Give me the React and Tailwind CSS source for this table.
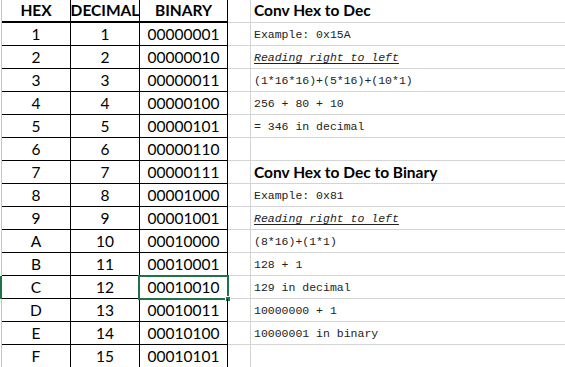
const rows = [
  ['1', '1', '00000001', 'Example: 0x15A', 'mono'],
  ['2', '2', '00000010', 'Reading right to left', 'italic'],
  ['3', '3', '00000011', '(1*16*16)+(5*16)+(10*1)', 'mono'],
  ['4', '4', '00000100', '256 + 80 + 10', 'mono'],
  ['5', '5', '00000101', '= 346 in decimal', 'mono'],
  ['6', '6', '00000110', '', 'mono'],
  ['7', '7', '00000111', 'Conv Hex to Dec to Binary', 'title'],
  ['8', '8', '00001000', 'Example: 0x81', 'mono'],
  ['9', '9', '00001001', 'Reading right to left', 'italic'],
  ['A', '10', '00010000', '(8*16)+(1*1)', 'mono'],
  ['B', '11', '00010001', '128 + 1', 'mono'],
  ['C', '12', '00010010', '129 in decimal', 'mono'],
  ['D', '13', '00010011', '10000000 + 1', 'mono'],
  ['E', '14', '00010100', '10000001 in binary', 'mono'],
  ['F', '15', '00010101', '', 'mono'],
];

const sans = "font-['Lato','Open_Sans',sans-serif]";

const NoteCell = ({ text, kind }) => {
  if (kind === 'title') {
    return <span className={`${sans} text-[15.5px] font-bold text-black`}>{text}</span>;
  }
  if (kind === 'italic') {
    return (
      <span className="font-['Liberation_Mono',monospace] text-[11.5px] italic underline underline-offset-2 text-[#222]">
        {text}
      </span>
    );
  }
  return <span className="font-['Liberation_Mono',monospace] text-[11.5px] text-[#222]">{text}</span>;
};

export default function App() {
  return (
    <div className="w-[565px] h-[367px] overflow-hidden bg-white">
      {/* header */}
      <div className="flex h-[23px]">
        <div className="w-[2px] border-r border-[#c6c6c6]" />
        <div className={`w-[69px] border-r border-b-2 border-black flex items-center justify-center ${sans} font-bold text-[15.5px] text-black`}>
          HEX
        </div>
        <div className={`w-[69px] border-r border-b-2 border-black flex items-center justify-center ${sans} font-bold text-[15.5px] text-black`}>
          DECIMAL
        </div>
        <div className={`w-[88px] border-r border-b-2 border-black flex items-center justify-center ${sans} font-bold text-[15.5px] text-black`}>
          BINARY
        </div>
        <div className="w-[23px] border-r border-b border-[#d4d4d4]" />
        <div className="flex-1 border-b border-[#d4d4d4] flex items-center pl-[3px]">
          <NoteCell text="Conv Hex to Dec" kind="title" />
        </div>
      </div>

      {rows.map(([hex, dec, bin, note, kind]) => {
        const selected = hex === 'C';
        return (
          <div key={hex} className="flex h-[23px]">
            <div className={selected ? 'w-[2px] bg-[#217346]' : 'w-[2px] border-r border-[#c6c6c6]'} />
            <div className={`w-[69px] border-r border-b border-black flex items-center justify-center pt-[2px] ${sans} text-[15.5px] text-black`}>
              {hex}
            </div>
            <div className={`w-[69px] border-r border-b border-black flex items-center justify-center pt-[2px] ${sans} text-[15.5px] text-black`}>
              {dec}
            </div>
            <div className={`relative w-[88px] border-r border-b border-black flex items-center justify-center pt-[2px] ${sans} text-[15.5px] text-black`}>
              {bin}
              {selected && (
                <>
                  <div className="absolute left-[-2px] top-[-1px] right-[-2px] bottom-[-2px] border-2 border-[#217346]" />
                  <div className="absolute right-[-4px] bottom-[-4px] w-[6px] h-[6px] bg-[#217346] border border-white" />
                </>
              )}
            </div>
            <div className="w-[23px] border-r border-b border-[#d4d4d4]" />
            <div className="flex-1 border-b border-[#d4d4d4] flex items-center pl-[3px] pt-[2px]">
              <NoteCell text={note} kind={kind} />
            </div>
          </div>
        );
      })}
    </div>
  );
}
